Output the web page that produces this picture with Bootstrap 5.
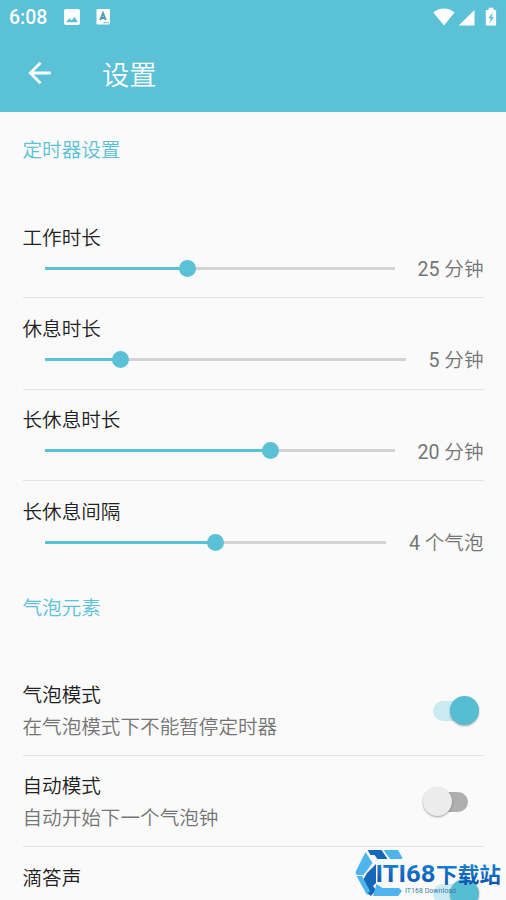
<!DOCTYPE html>
<html lang="zh-CN">
<head>
<meta charset="utf-8">
<meta name="viewport" content="width=device-width, initial-scale=1">
<title>设置</title>
<link href="https://cdn.jsdelivr.net/npm/bootstrap@5.3.0/dist/css/bootstrap.min.css" rel="stylesheet">
<style>
  :root { --teal: #5ac1d7; }
  body { font-family: Roboto, "Noto Sans CJK SC", sans-serif; font-weight: 350; background: #fafafa; font-size: 19.6px; line-height: 30px; color: #212121; }
  .screen { width: 506px; height: 900px; }
  .topbar { background: var(--teal); height: 112px; color: #fff; }
  .status { height: 34px; padding: 0 9px; }
  .clock { font-size: 19.5px; font-weight: 500; width: 55px; line-height: 34px; padding-top: 2px; }
  .toolbar { height: 78px; padding-left: 28px; }
  .toolbar h1 { font-size: 27.3px; font-weight: 350; margin-left: 50px; line-height: 40px; padding-top: 5px; }
  .content { padding: 0 22.5px; }
  .group-title { color: var(--teal); height: 95px; padding-top: 23.5px; }
  .group-title.second { height: 92px; padding-top: 21.5px; }
  .setting { height: 91.4px; border-bottom: 1.5px solid #e4e4e4; padding-top: 16.5px; }
  .setting.plain { border-color: transparent; }
  .value, .hint { color: #757575; }
  .value { padding-top: 2px; }
  .slider-row { padding-left: 22px; gap: 22.5px; margin-top: -.5px; }
  .track { height: 3px; background: #d3d3d3; margin-top: -2px; }
  .fill { height: 3px; background: var(--teal); }
  .knob { width: 17px; height: 17px; background: var(--teal); margin-right: -8.5px; }
  .hint { margin-top: 1.5px; }
  .switch { width: 56px; height: 30px; margin-right: -1px; }
  .rail { width: 35px; height: 20px; border-radius: 10px; background: #c8eaf0; left: 4px; top: 4px; }
  .thumb { width: 29px; height: 29px; background: #57bdd2; left: 21px; top: -1px; box-shadow: 0 1px 2px rgba(0,0,0,.35); }
  .off .rail { background: #afafaf; }
  .off .thumb { background: #ececec; left: -6px; }
  .watermark { left: 352px; top: 846px; }
</style>
</head>
<body>
<div class="screen position-relative overflow-hidden">
  <header class="topbar">
    <div class="status d-flex align-items-center">
      <span class="clock">6:08</span>
      <svg width="16" height="16" viewBox="0 0 16 16"><path fill="#fff" d="M2 0h12a2 2 0 0 1 2 2v12a2 2 0 0 1-2 2H2a2 2 0 0 1-2-2V2a2 2 0 0 1 2-2z"/><path fill="#5ac1d7" d="M2.3 13.3l3.1-4.4 2.2 2.7 3-3.9 3.4 5.6z"/></svg>
      <svg class="ms-3" width="14" height="16" viewBox="0 0 14 16"><rect x=".5" width="13.5" height="15.5" rx="1.3" fill="#fff"/><path d="M4.2 11.2L7 4l2.8 7.2M5 9h4" fill="none" stroke="#5199ad" stroke-width="1.8"/><path d="M7.5 13.6h5.5" stroke="#5ac1d7" stroke-width="1.2" stroke-dasharray="1.4 .6"/></svg>
      <svg class="ms-auto" width="64" height="22" viewBox="0 0 64 22"><path fill="#fff" d="M.3 6.5C6 1 16 1 21.5 6.5L11 19.5z"/><path fill="#fff" d="M41.5 4V19.5H25.7z"/><path fill="#fff" d="M55.7 1.8h4.8V4h2.6v15.5H52.8V4h2.9z"/><path fill="#5ac1d7" d="M60 6.3l-4.7 6h2.4l-1.3 5 4.6-6.4h-2.5z"/></svg>
    </div>
    <div class="toolbar d-flex align-items-center">
      <svg width="24" height="24" viewBox="0 0 24 24" fill="none" stroke="#fff" stroke-width="2.8"><path d="M22.8 12H2.5M12.5 1.7L2.3 12l10.2 10.3"/></svg>
      <h1 class="mb-0">设置</h1>
    </div>
  </header>
  <main class="content">
    <section>
      <div class="group-title">定时器设置</div>
      <div class="setting">
        <div>工作时长</div>
        <div class="slider-row d-flex align-items-center"><div class="track flex-grow-1 d-flex align-items-center"><div class="fill d-flex align-items-center justify-content-end" style="width:40.7%"><span class="knob rounded-circle flex-shrink-0"></span></div></div><span class="value"><span class="fw-normal">25</span> 分钟</span></div>
      </div>
      <div class="setting">
        <div>休息时长</div>
        <div class="slider-row d-flex align-items-center"><div class="track flex-grow-1 d-flex align-items-center"><div class="fill d-flex align-items-center justify-content-end" style="width:21.1%"><span class="knob rounded-circle flex-shrink-0"></span></div></div><span class="value"><span class="fw-normal">5</span> 分钟</span></div>
      </div>
      <div class="setting">
        <div>长休息时长</div>
        <div class="slider-row d-flex align-items-center"><div class="track flex-grow-1 d-flex align-items-center"><div class="fill d-flex align-items-center justify-content-end" style="width:64.4%"><span class="knob rounded-circle flex-shrink-0"></span></div></div><span class="value"><span class="fw-normal">20</span> 分钟</span></div>
      </div>
      <div class="setting plain">
        <div>长休息间隔</div>
        <div class="slider-row d-flex align-items-center"><div class="track flex-grow-1 d-flex align-items-center"><div class="fill d-flex align-items-center justify-content-end" style="width:50%"><span class="knob rounded-circle flex-shrink-0"></span></div></div><span class="value"><span class="fw-normal">4</span> 个气泡</span></div>
      </div>
    </section>
    <section>
      <div class="group-title second">气泡元素</div>
      <div class="setting d-flex justify-content-between">
        <div><div>气泡模式</div><div class="hint">在气泡模式下不能暂停定时器</div></div>
        <div class="switch position-relative mt-3"><span class="rail position-absolute"></span><span class="thumb position-absolute rounded-circle"></span></div>
      </div>
      <div class="setting d-flex justify-content-between">
        <div><div>自动模式</div><div class="hint">自动开始下一个气泡钟</div></div>
        <div class="switch off position-relative mt-3"><span class="rail position-absolute"></span><span class="thumb position-absolute rounded-circle"></span></div>
      </div>
      <div class="setting d-flex justify-content-between">
        <div>滴答声</div>
        <div class="switch position-relative mt-3"><span class="rail position-absolute"></span><span class="thumb position-absolute rounded-circle"></span></div>
      </div>
    </section>
  </main>
  <svg class="watermark position-absolute" width="154" height="54" viewBox="0 0 154 54">
    <defs><linearGradient id="ink" x1="0" y1="0" x2="0" y2="1"><stop offset="0" stop-color="#1c86d8"/><stop offset="1" stop-color="#0a4fa8"/></linearGradient></defs>
    <g transform="translate(1 0)">
      <path fill="#1468b8" d="M14.500 4h14l6 9H24.500l-3-4h-4z"/>
      <path fill="#4db4ee" d="M30.500 4H45l4.500 8-1 1H37z"/>
      <path fill="#4db4ee" d="M12.500 6l7 11L10.500 29H3.500L2.500 26z"/>
      <path fill="#1468b8" d="M23 18v19l-3 3 3 4-5 6-3-2-6-12 5-9z"/>
      <path fill="#4db4ee" d="M3.500 30h5.500l8 15-3 4z"/>
      <path fill="#4db4ee" d="M23.500 38l6 4H46l3 3-4 5H20z"/>
    </g>
    <g font-family="Roboto, 'Noto Sans CJK SC', sans-serif" fill="url(#ink)">
      <text x="23.500" y="35.500" font-size="23" font-weight="700" textLength="60" lengthAdjust="spacingAndGlyphs" stroke="#fafafa" stroke-width="1" paint-order="stroke">ITI68</text>
      <text x="84" y="35.500" font-size="21" font-weight="700" textLength="65" lengthAdjust="spacingAndGlyphs">下载站</text>
    </g>
    <text x="53" y="47" font-family="Roboto, sans-serif" font-size="7" font-weight="400" textLength="51" fill="#397aa9">IT168 Download</text>
  </svg>
</div>
<script src="https://cdn.jsdelivr.net/npm/bootstrap@5.3.0/dist/js/bootstrap.bundle.min.js"></script>
</body>
</html>
